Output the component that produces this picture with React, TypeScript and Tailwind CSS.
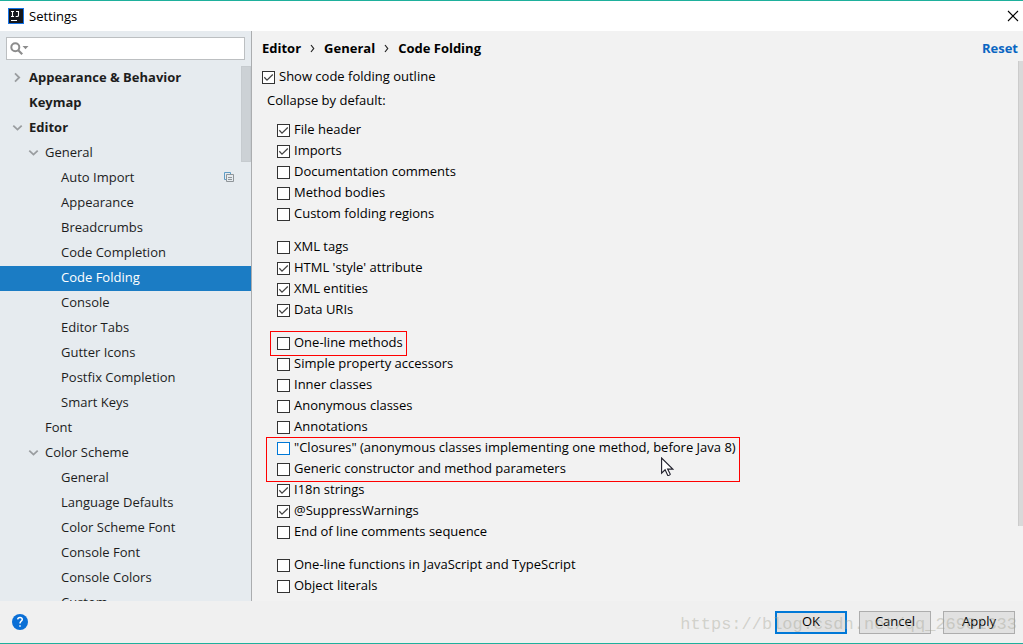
import { useState } from "react";

type Node = { label: string; level: 0 | 1 | 2; state?: "open" | "closed"; copy?: boolean };

const tree: Node[] = [
  { label: "Appearance & Behavior", level: 0, state: "closed" },
  { label: "Keymap", level: 0 },
  { label: "Editor", level: 0, state: "open" },
  { label: "General", level: 1, state: "open" },
  { label: "Auto Import", level: 2, copy: true },
  { label: "Appearance", level: 2 },
  { label: "Breadcrumbs", level: 2 },
  { label: "Code Completion", level: 2 },
  { label: "Code Folding", level: 2 },
  { label: "Console", level: 2 },
  { label: "Editor Tabs", level: 2 },
  { label: "Gutter Icons", level: 2 },
  { label: "Postfix Completion", level: 2 },
  { label: "Smart Keys", level: 2 },
  { label: "Font", level: 1 },
  { label: "Color Scheme", level: 1, state: "open" },
  { label: "General", level: 2 },
  { label: "Language Defaults", level: 2 },
  { label: "Color Scheme Font", level: 2 },
  { label: "Console Font", level: 2 },
  { label: "Console Colors", level: 2 },
  { label: "Custom", level: 2 },
];

const indent = {
  0: "pl-3 font-bold",
  1: "pl-7",
  2: "pl-11",
};

function Chevron({ state }: { state?: "open" | "closed" }) {
  return (
    <svg className="size-[11px] shrink-0" viewBox="0 0 11 11" fill="none" stroke="#9a9da0" strokeWidth="1.8" aria-hidden="true">
      {state === "open" && <path d="M1.3 3.6 5.5 7.6 9.7 3.6" />}
      {state === "closed" && <path d="M3 1.3 7.2 5.5 3 9.7" />}
    </svg>
  );
}

function TreeRow({ node, selected, onSelect }: { node: Node; selected: boolean; onSelect: () => void }) {
  return (
    <li>
      <button
        type="button"
        onClick={onSelect}
        className={`flex h-[25px] w-full items-center gap-1.5 pr-[17px] pb-[3px] text-left ${indent[node.level]} ${
          selected ? "bg-[#1b7cc4] text-white" : "text-[#1d1d1d]"
        }`}
      >
        <Chevron state={node.state} />
        <span className="flex-1">{node.label}</span>
        {node.copy && (
          <svg className="size-[10px]" viewBox="0 0 10 10" fill="none" aria-hidden="true">
            <path d="M2 7.5H.5v-7h6V2" stroke="#5f9cc5" />
            <path d="M2.5 2.5h7v7h-7zM4 5.5h4M4 7.5h4" stroke="#8f9599" />
          </svg>
        )}
      </button>
    </li>
  );
}

function Check({ label, checked = false, focus = false }: { label: string; checked?: boolean; focus?: boolean }) {
  const [on, setOn] = useState(checked);
  return (
    <label className="flex h-[21px] w-fit items-center gap-1">
      <span className="grid shrink-0">
        <input
          type="checkbox"
          checked={on}
          onChange={(e) => setOn(e.target.checked)}
          className={`col-start-1 row-start-1 size-[13px] appearance-none border bg-white ${focus ? "border-[#0078d7]" : "border-[#333333]"}`}
        />
        {on && (
          <svg className="pointer-events-none col-start-1 row-start-1 size-[13px]" viewBox="0 0 13 13" fill="none" stroke="#444" strokeWidth="1.3" aria-hidden="true">
            <path d="M2.3 6.3 5 9.1 10.8 3.5" />
          </svg>
        )}
      </span>
      <span className="pb-[3px]">{label}</span>
    </label>
  );
}

function Separator() {
  return (
    <svg className="h-[9px] w-[5px]" viewBox="0 0 5 9" fill="none" stroke="#222" strokeWidth="1.2" aria-hidden="true">
      <path d="M1 1 3.7 4.5 1 8" />
    </svg>
  );
}

export default function App() {
  const [selected, setSelected] = useState(8);
  return (
    <div className="relative flex h-screen flex-col overflow-hidden border-y border-[#1eb09c] bg-[#f0f0f0] font-['Open_Sans',sans-serif] text-[13px] leading-[18px] text-black">
      <header className="flex h-[30px] shrink-0 items-center gap-[5px] bg-white pr-1 pl-2">
        <svg className="size-4" viewBox="0 0 16 16" aria-hidden="true">
          <rect width="16" height="16" fill="#1673e6" />
          <rect x="1" y="1" width="14" height="14" fill="#15171c" />
          <path d="M3 3.5h3M4.5 3.5v5M3 8.5h3M8 3.5h2.5v3.7q0 1.3-1.3 1.3H7.7M3 12.5h6" fill="none" stroke="#fff" strokeWidth="1.1" />
        </svg>
        <h1 className="flex-1">Settings</h1>
        <button type="button" aria-label="Close">
          <svg className="size-3" viewBox="0 0 12 12" fill="none" stroke="#000" strokeWidth="1.1" aria-hidden="true">
            <path d="M1 1l10 10M11 1 1 11" />
          </svg>
        </button>
      </header>

      <div className="flex min-h-0 flex-1">
        <aside className="relative flex w-[252px] shrink-0 flex-col border-r border-[#abadaf] bg-[#e6ebef]">
          <div className="px-1.5 py-1.5">
            <div className="flex h-[23px] items-center border border-[#bcbfc1] bg-white pl-[3px]">
              <svg className="h-[13px] w-[19px] shrink-0" viewBox="0 0 19 13" aria-hidden="true">
                <circle cx="5.3" cy="5.3" r="4" fill="none" stroke="#8c8c8c" strokeWidth="2" />
                <path d="m8.2 8.2 4 4" stroke="#8c8c8c" strokeWidth="2.2" />
                <path d="M12.5 4h6l-3 3.3z" fill="#8c8c8c" />
              </svg>
              <input type="text" aria-label="Search settings" className="h-full min-w-0 flex-1 bg-transparent px-1 outline-none" />
            </div>
          </div>
          <ul className="min-h-0 flex-1 overflow-hidden">
            {tree.map((node, i) => (
              <TreeRow key={i} node={node} selected={i === selected} onSelect={() => setSelected(i)} />
            ))}
          </ul>
          <div className="absolute top-[35px] right-0 h-24 w-[10px] border border-[#c6cbcf] bg-[#ccd1d5]" />
        </aside>

        <main className="relative flex min-w-0 flex-1 flex-col overflow-hidden bg-[#f2f2f2] pt-2 pl-[10px]">
          <div className="flex items-center justify-between pr-[5px] font-bold">
            <nav className="flex items-center gap-[9px]" aria-label="Breadcrumb">
              <span>Editor</span>
              <Separator />
              <span>General</span>
              <Separator />
              <span>Code Folding</span>
            </nav>
            <a href="#reset" className="text-[#0a66c2]">Reset</a>
          </div>
          <div className="pt-[10px]">
            <Check label="Show code folding outline" checked />
            <p className="pt-[3px] pl-[5px]">Collapse by default:</p>
          </div>
          <div className="flex flex-col gap-3 pt-[11px] pl-[15px]">
            <div>
              <Check label="File header" checked />
              <Check label="Imports" checked />
              <Check label="Documentation comments" />
              <Check label="Method bodies" />
              <Check label="Custom folding regions" />
            </div>
            <div>
              <Check label="XML tags" />
              <Check label="HTML 'style' attribute" checked />
              <Check label="XML entities" checked />
              <Check label="Data URIs" checked />
            </div>
            <div>
              <div className="relative w-fit">
                <Check label="One-line methods" />
                <div className="pointer-events-none absolute -top-0.5 -right-1 -bottom-0.5 -left-[7px] border border-[#ff0000]" />
              </div>
              <Check label="Simple property accessors" />
              <Check label="Inner classes" />
              <Check label="Anonymous classes" />
              <Check label="Annotations" />
              <div className="relative w-fit">
                <Check label={'"Closures" (anonymous classes implementing one method, before Java 8)'} focus />
                <Check label="Generic constructor and method parameters" />
                <div className="pointer-events-none absolute -top-px -right-1 -bottom-0.5 -left-[11px] border border-[#ff0000]" />
                <svg className="pointer-events-none absolute bottom-[3px] left-[384px] h-[20px] w-[13px]" viewBox="0 0 13 20" aria-hidden="true">
                  <path d="M.6 1v15.2l3.5-3.4 2.7 5.6q1.7.4 2.5-1.1l-2.7-5.2h5.2z" fill="#fff" stroke="#20202c" strokeWidth="1.1" />
                </svg>
              </div>
              <Check label="I18n strings" checked />
              <Check label="@SuppressWarnings" checked />
              <Check label="End of line comments sequence" />
            </div>
            <div>
              <Check label="One-line functions in JavaScript and TypeScript" />
              <Check label="Object literals" />
            </div>
          </div>
          <div className="absolute top-[30px] right-0 h-[465px] w-[5px] border-l border-[#cccccc] bg-[#d9d9d9]" />
        </main>
      </div>

      <footer className="flex h-[42px] shrink-0 items-center gap-3 pr-2 pl-3">
        <button type="button" aria-label="Help" className="grid size-4 place-items-center rounded-full bg-[#0a6fd6] text-white">
          <svg className="size-4" viewBox="0 0 16 16" fill="none" stroke="#fff" strokeWidth="1.5" aria-hidden="true">
            <path d="M5.7 5.4q.2-2 2.3-2t2.3 1.9q0 1.2-1.3 2Q8 8 8 9.6M8 11.2v1.6" />
          </svg>
        </button>
        <div className="flex-1" />
        <button type="button" className="flex h-[23px] w-[72px] items-center justify-center border-2 border-[#0078d7] bg-[#e1e1e1] pb-0.5">OK</button>
        <button type="button" className="flex h-[23px] w-[72px] items-center justify-center border border-[#adadad] bg-[#e1e1e1] pb-0.5">Cancel</button>
        <button type="button" className="flex h-[23px] w-[72px] items-center justify-center border border-[#adadad] bg-[#e1e1e1] pb-0.5">Apply</button>
      </footer>
      <p className="pointer-events-none absolute right-[6px] bottom-[8px] font-['Liberation_Mono',monospace] text-[17px] leading-5 text-[#a0a090]/40">
        https://blog.csdn.net/qq_26981333
      </p>
    </div>
  );
}
